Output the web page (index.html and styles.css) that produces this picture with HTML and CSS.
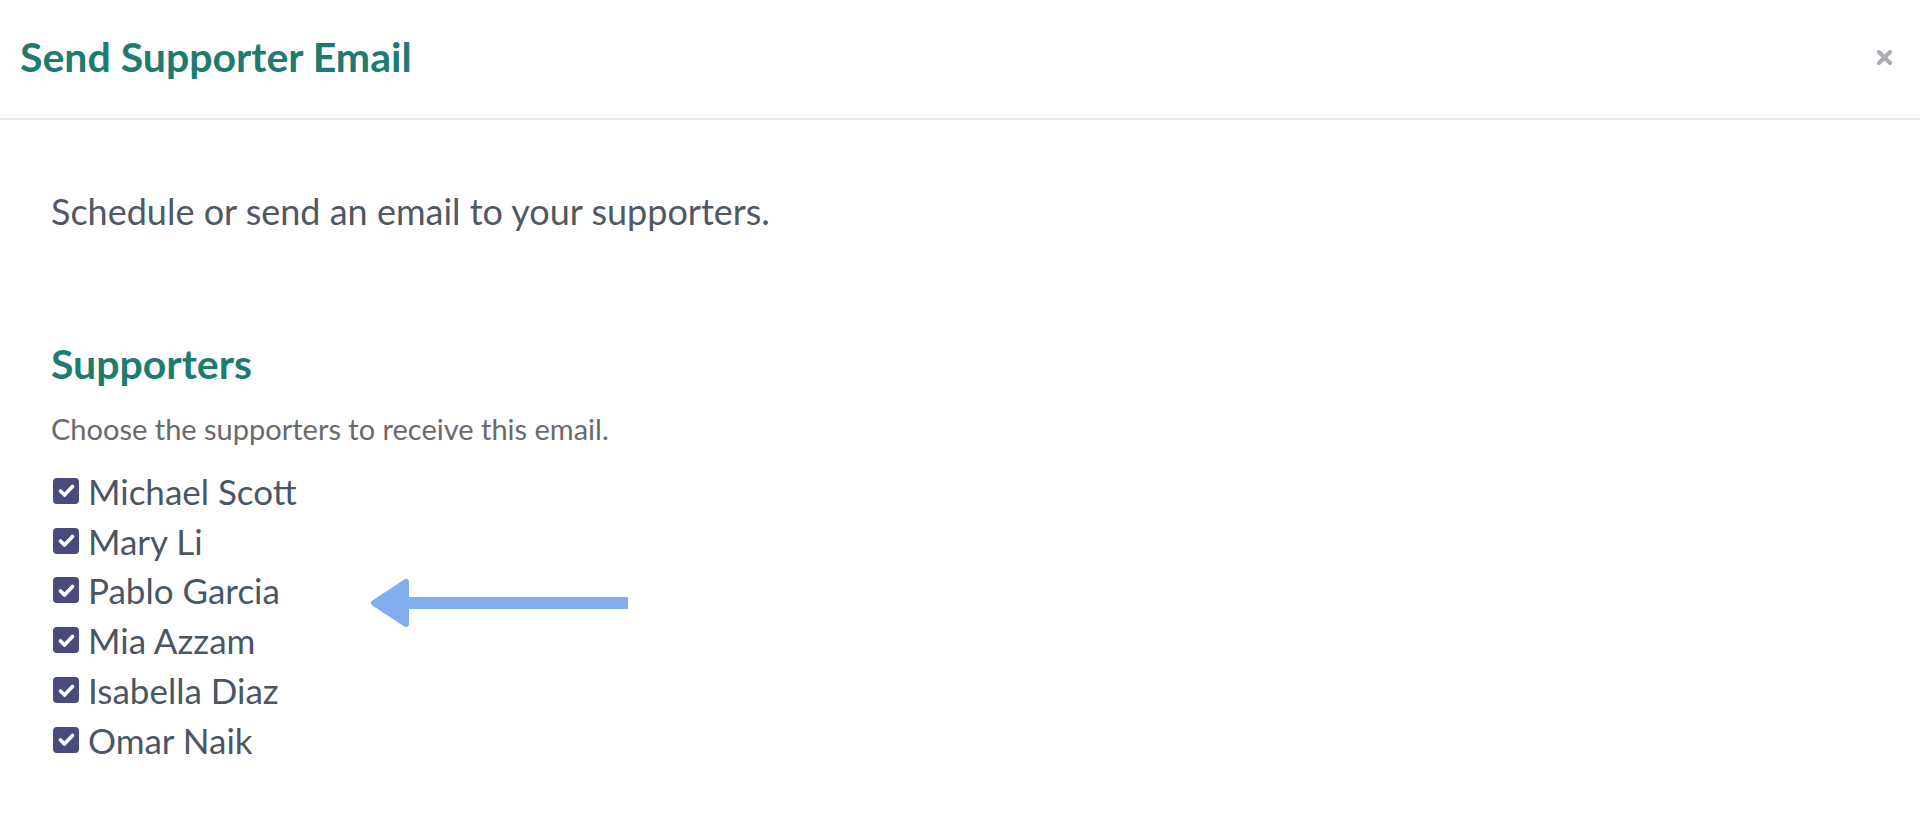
FILE: index.html
```html
<!DOCTYPE html>
<html lang="en">
<head>
<meta charset="utf-8">
<title>Send Supporter Email</title>
<link rel="stylesheet" href="styles.css">
</head>
<body>
<div class="modal">
  <header class="modal-header">
    <h1 class="modal-title">Send Supporter Email</h1>
    <button class="close" aria-label="Close">
      <svg width="15" height="15" viewBox="0 0 15 15"><path d="M2 2 L13 13 M13 2 L2 13" stroke="#a9adb3" stroke-width="4" stroke-linecap="round" fill="none"/></svg>
    </button>
  </header>
  <main class="modal-body">
    <p class="intro">Schedule or send an email to your supporters.</p>
    <h2 class="section-title">Supporters</h2>
    <p class="hint">Choose the supporters to receive this email.</p>
    <ul class="list">
      <li class="row"><span class="check"><svg width="25" height="25" viewBox="0 0 25 25"><path d="M6.5 13 L10.5 17 L18.5 8.5" stroke="#fff" stroke-width="3.6" stroke-linecap="round" stroke-linejoin="round" fill="none"/></svg></span>Michael Scott</li>
      <li class="row"><span class="check"><svg width="25" height="25" viewBox="0 0 25 25"><path d="M6.5 13 L10.5 17 L18.5 8.5" stroke="#fff" stroke-width="3.6" stroke-linecap="round" stroke-linejoin="round" fill="none"/></svg></span>Mary Li</li>
      <li class="row"><span class="check"><svg width="25" height="25" viewBox="0 0 25 25"><path d="M6.5 13 L10.5 17 L18.5 8.5" stroke="#fff" stroke-width="3.6" stroke-linecap="round" stroke-linejoin="round" fill="none"/></svg></span>Pablo Garcia</li>
      <li class="row"><span class="check"><svg width="25" height="25" viewBox="0 0 25 25"><path d="M6.5 13 L10.5 17 L18.5 8.5" stroke="#fff" stroke-width="3.6" stroke-linecap="round" stroke-linejoin="round" fill="none"/></svg></span>Mia Azzam</li>
      <li class="row"><span class="check"><svg width="25" height="25" viewBox="0 0 25 25"><path d="M6.5 13 L10.5 17 L18.5 8.5" stroke="#fff" stroke-width="3.6" stroke-linecap="round" stroke-linejoin="round" fill="none"/></svg></span>Isabella Diaz</li>
      <li class="row"><span class="check"><svg width="25" height="25" viewBox="0 0 25 25"><path d="M6.5 13 L10.5 17 L18.5 8.5" stroke="#fff" stroke-width="3.6" stroke-linecap="round" stroke-linejoin="round" fill="none"/></svg></span>Omar Naik</li>
    </ul>
    <svg class="arrow" width="260" height="54" viewBox="0 0 260 54">
      <path d="M38 26 L258 26" stroke="#82aef0" stroke-width="12" fill="none"/>
      <path d="M4 26 L36 5 L36 47 Z" fill="#82aef0" stroke="#82aef0" stroke-width="6" stroke-linejoin="round"/>
    </svg>
  </main>
</div>
</body>
</html>
```

FILE: styles.css
```css
html, body {
  margin: 0;
  padding: 0;
  background: #ffffff;
}
body {
  font-family: Lato, "Open Sans", sans-serif;
  width: 1920px;
  height: 831px;
  overflow: hidden;
}
.modal {
  position: relative;
}
.modal-header {
  height: 118px;
  border-bottom: 2px solid #e6e6e6;
  display: flex;
  align-items: center;
  justify-content: space-between;
  padding: 0 28px 0 20px;
}
.modal-title {
  margin: 0;
  font-size: 41px;
  line-height: 48px;
  font-weight: 700;
  color: #1e7b70;
  padding-bottom: 4px;
}
.close {
  border: 0;
  background: none;
  padding: 0;
  width: 15px;
  height: 15px;
  display: flex;
  margin-bottom: 4px;
}
.modal-body {
  position: relative;
  padding: 71px 0 0 51px;
}
.intro {
  margin: 0;
  font-size: 36px;
  line-height: 40px;
  color: #4f5864;
}
.section-title {
  margin: 109px 0 0;
  font-size: 41px;
  line-height: 48px;
  font-weight: 700;
  color: #1e7b70;
}
.hint {
  margin: 24px 0 0;
  font-size: 29px;
  line-height: 34px;
  color: #6a6a6a;
}
.list {
  list-style: none;
  margin: 20px 0 0;
  padding: 0;
}
.row {
  display: flex;
  align-items: center;
  height: 49.8px;
  font-size: 35px;
  color: #4a5663;
}
.check {
  width: 26px;
  height: 26px;
  border-radius: 4px;
  background: #4b4a7d;
  margin: 0 9px 0 2px;
  display: flex;
  flex: none;
  align-items: center;
  justify-content: center;
}
.arrow {
  position: absolute;
  left: 370px;
  top: 457px;
}
```
